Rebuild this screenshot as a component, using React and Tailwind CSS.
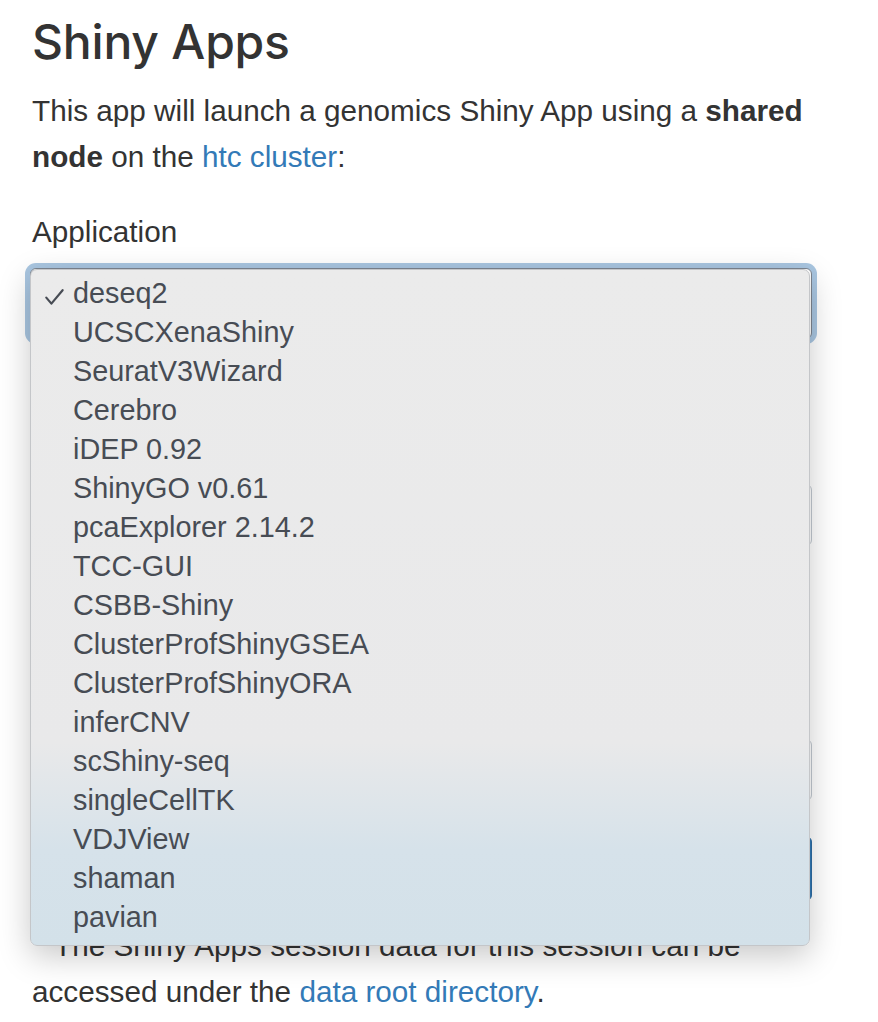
import React from "react";

const apps = [
  "deseq2",
  "UCSCXenaShiny",
  "SeuratV3Wizard",
  "Cerebro",
  "iDEP 0.92",
  "ShinyGO v0.61",
  "pcaExplorer 2.14.2",
  "TCC-GUI",
  "CSBB-Shiny",
  "ClusterProfShinyGSEA",
  "ClusterProfShinyORA",
  "inferCNV",
  "scShiny-seq",
  "singleCellTK",
  "VDJView",
  "shaman",
  "pavian",
];

function Check() {
  return (
    <svg width="19" height="16" viewBox="0 0 19 16" className="mt-[7px]" fill="none">
      <path d="M1.3 8.6 L6.4 14.6 L17.6 1.2" stroke="#474c54" strokeWidth="2.2" strokeLinecap="round" strokeLinejoin="round" />
    </svg>
  );
}

export default function App() {
  return (
    <div className="min-h-screen bg-white text-[#333333] font-['Liberation_Sans',Arial,sans-serif] overflow-hidden">
      <div className="pl-[30px] w-[812px]">
        <h1 className="pl-[2px] pt-[15px] text-[48px] leading-[54px] font-medium font-['Inter','Liberation_Sans',sans-serif] tracking-[-0.2px]">
          Shiny Apps
        </h1>
        <p className="pl-[2px] mt-[19px] text-[29.7px] leading-[46px]">
          This app will launch a genomics Shiny App using a <strong className="font-bold">shared node</strong> on the{" "}
          <a href="#" className="text-[#337ab7]">htc cluster</a>:
        </p>

        <div className="mt-[28.5px]">
          <label className="block pl-[2px] text-[29.7px] leading-[46.5px]">Application</label>
          <div className="relative mt-[12.5px]">
            <div className="h-[71px] rounded-[6px] border border-[#7d8590] bg-white ring-[5px] ring-[#a9c6e1]"></div>
            <div className="absolute left-0 top-[1px] z-10 w-[780px] h-[677px] rounded-[7px] border border-[#c4c6c9] shadow-[0_10px_32px_rgba(0,0,0,0.22)] bg-[linear-gradient(to_bottom,#ebebeb_0%,#e9e9ea_70%,#d6e2ea_86%,#d3e1e9_100%)] pt-[4px] pb-[8px]">
              {apps.map((a, i) => (
                <div key={a} className="flex items-center h-[39px] pl-[14px] text-[28.8px] leading-[39px] text-[#474c54]">
                  <div className="w-[28px] flex items-center">{i === 0 ? <Check /> : null}</div>
                  <span>{a}</span>
                </div>
              ))}
            </div>
          </div>
        </div>

        <div className="mt-[24px]">
          <label className="block pl-[2px] text-[29.7px] leading-[46.5px]">Number of hours</label>
          <div className="mt-[74.5px] h-[62px] rounded-[6px] border border-[#c2c9d1] bg-white"></div>
        </div>

        <div className="mt-[24px]">
          <label className="block pl-[2px] text-[29.7px] leading-[46.5px]">Memory (GB)</label>
          <p className="pl-[2px] text-[24px] leading-[40px] text-[#737373]">Amount of memory to request</p>
          <div className="mt-[82.5px] h-[62px] rounded-[6px] border border-[#c2c9d1] bg-white"></div>
        </div>

        <button className="mt-[35px] w-full h-[65px] rounded-[6px] border border-[#2e6da4] bg-[#337ab7] text-white text-[29.7px]">
          Launch
        </button>

        <p className="pl-[2px] mt-[22px] indent-[22px] text-[29.7px] leading-[46.5px]">
          The Shiny Apps session data for this session can be accessed under the{" "}
          <a href="#" className="text-[#337ab7]">data root directory</a>.
        </p>
      </div>
    </div>
  );
}
